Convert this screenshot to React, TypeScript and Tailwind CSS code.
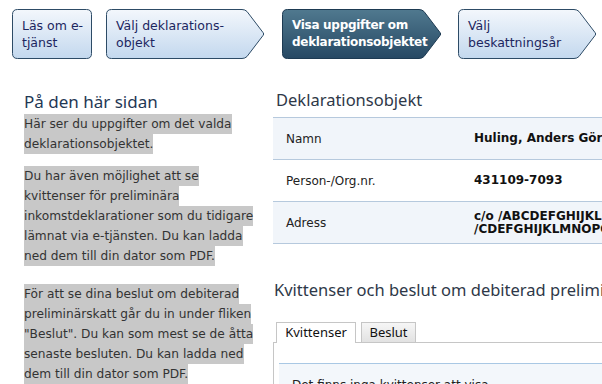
import React from 'react';

type Step = { lines: string[]; width: number; arrow: boolean; active?: boolean; ml: string };

const steps: Step[] = [
    { lines: ['Läs om e-', 'tjänst'], width: 80, arrow: false, ml: 'ml-[12px]' },
    { lines: ['Välj deklarations-', 'objekt'], width: 159, arrow: true, ml: 'ml-[14px]' },
    { lines: ['Visa uppgifter om', 'deklarationsobjektet'], width: 160, arrow: true, active: true, ml: 'ml-[17px]' },
    { lines: ['Välj', 'beskattningsår'], width: 139, arrow: true, ml: 'ml-[16px]' },
];

const intro: { mb: string; lines: string[] }[] = [
    { mb: 'mb-[12px]', lines: ['Här ser du uppgifter om det valda', 'deklarationsobjektet.'] },
    {
        mb: 'mb-[18px]',
        lines: [
            'Du har även möjlighet att se',
            'kvittenser för preliminära',
            'inkomstdeklarationer som du tidigare',
            'lämnat via e-tjänsten. Du kan ladda',
            'ned dem till din dator som PDF.',
        ],
    },
    {
        mb: 'mb-0',
        lines: [
            'För att se dina beslut om debiterad',
            'preliminärskatt går du in under fliken',
            '"Beslut". Du kan som mest se de åtta',
            'senaste besluten. Du kan ladda ned',
            'dem till din dator som PDF.',
        ],
    },
];

const rows = [
    { label: 'Namn', value: ['Huling, Anders Göran Mikael'], shade: true },
    { label: 'Person-/Org.nr.', value: ['431109-7093'], shade: false },
    { label: 'Adress', value: ['c/o /ABCDEFGHIJKLMNOPQRSTU', '/CDEFGHIJKLMNOPQRSTUVWX'], shade: true },
];

function StepShape({ w, arrow, active, id }: { w: number; arrow: boolean; active?: boolean; id: string }) {
    const h = 50;
    const a = 20;
    const r = 5;
    const x0 = 0.5;
    const y0 = 0.5;
    const x1 = w - 0.5;
    const y1 = h - 0.5;
    const bx = w - a;
    const d = arrow
        ? `M${x0 + r},${y0} H${bx - 3} Q${bx},${y0} ${bx + 2},${y0 + 2} L${x1 - 1.5},${h / 2 - 1.5} Q${x1},${h / 2} ${x1 - 1.5},${h / 2 + 1.5} L${bx + 2},${y1 - 2} Q${bx},${y1} ${bx - 3},${y1} H${x0 + r} Q${x0},${y1} ${x0},${y1 - r} V${y0 + r} Q${x0},${y0} ${x0 + r},${y0} Z`
        : `M${x0 + r},${y0} H${x1 - r} Q${x1},${y0} ${x1},${y0 + r} V${y1 - r} Q${x1},${y1} ${x1 - r},${y1} H${x0 + r} Q${x0},${y1} ${x0},${y1 - r} V${y0 + r} Q${x0},${y0} ${x0 + r},${y0} Z`;
    return (
        <svg width={w} height={h} className="absolute inset-0">
            <defs>
                <linearGradient id={id} x1="0" y1="0" x2="0" y2="1">
                    <stop offset="0" stopColor={active ? '#50798f' : '#f3f7fc'} />
                    <stop offset="1" stopColor={active ? '#264863' : '#c3d8ee'} />
                </linearGradient>
            </defs>
            <path d={d} fill={`url(#${id})`} stroke={active ? '#1d3a52' : '#2d4b66'} strokeWidth="1" />
        </svg>
    );
}

export default function App() {
    return (
        <div className="w-[602px] h-[384px] overflow-hidden bg-white font-['DejaVu_Sans',sans-serif]">
            <div className="flex pt-[9px]">
                {steps.map((s, i) => (
                    <div
                        key={i}
                        className={`relative h-[50px] shrink-0 ${s.ml}`}
                        style={{ width: s.width }}
                    >
                        <StepShape w={s.width} arrow={s.arrow} active={s.active} id={`g${i}`} />
                        <div
                            className={`relative flex h-full flex-col justify-center pl-[10px] leading-[17px] ${
                                s.active
                                    ? 'text-[12px] font-bold tracking-[-0.3px] text-white'
                                    : 'text-[12.5px] text-[#1c2660]'
                            }`}
                        >
                            {s.lines.map((l) => (
                                <span key={l} className="whitespace-nowrap">
                                    {l}
                                </span>
                            ))}
                        </div>
                    </div>
                ))}
            </div>

            <div className="flex pt-[29px]">
                <div className="ml-[24px] w-[231px] shrink-0 pt-[2px]">
                    <h2 className="font-['Noto_Sans',sans-serif] text-[17px] leading-[24px] text-[#1f3854]">
                        På den här sidan
                    </h2>
                    <div className="text-[12.2px] leading-[20px] text-[#333]">
                        {intro.map((p, i) => (
                            <p key={i} className={p.mb}>
                                {p.lines.map((l, j) => (
                                    <React.Fragment key={j}>
                                        <span className="whitespace-nowrap bg-[#c8c8c8] py-[3px]">{l}</span>
                                        <br />
                                    </React.Fragment>
                                ))}
                            </p>
                        ))}
                    </div>
                </div>

                <div className="ml-[18px] min-w-0 flex-1 overflow-hidden">
                    <h2 className="pl-[3px] font-['Noto_Sans',sans-serif] text-[16.5px] leading-[24px] text-[#2e3848]">
                        Deklarationsobjekt
                    </h2>
                    <div className="mt-[5px] w-[500px] border-b border-[#b6c9dd]">
                        {rows.map((r) => (
                            <div
                                key={r.label}
                                className={`flex h-[42px] items-center border-t border-[#b6c9dd] text-[12px] ${
                                    r.shade ? 'bg-[#f1f5fa]' : 'bg-white'
                                }`}
                            >
                                <div className="w-[201px] shrink-0 pl-[13px] text-[#222]">{r.label}</div>
                                <div className="flex flex-col whitespace-nowrap font-bold leading-[13px] text-[#111]">
                                    {r.value.map((v) => (
                                        <span key={v}>{v}</span>
                                    ))}
                                </div>
                            </div>
                        ))}
                    </div>

                    <h2 className="mt-[34px] whitespace-nowrap pl-[1px] font-['Noto_Sans',sans-serif] text-[16.5px] leading-[24px] text-[#2e3848]">
                        Kvittenser och beslut om debiterad preliminärskatt
                    </h2>

                    <div className="mt-[20px] w-[500px]">
                        <div className="flex gap-[5px] pl-[3px] font-['Noto_Sans',sans-serif] text-[13px] text-[#111]">
                            <div className="relative z-10 -mb-px flex h-[21px] w-[80px] items-center justify-center border border-b-0 border-[#c6c6c6] bg-white">
                                Kvittenser
                            </div>
                            <div className="flex h-[20px] w-[55px] items-center justify-center border border-b-0 border-[#c6c6c6] bg-gradient-to-b from-[#f6f6f6] to-[#e2e2e2]">
                                Beslut
                            </div>
                        </div>
                        <div className="border-l border-t border-[#c6c6c6] pl-[5px] pt-[20px]">
                            <div className="border-t border-[#a9c8e4] bg-[#f3f7fb] pl-[13px] pt-[12px] text-[12px] text-[#222]">
                                Det finns inga kvittenser att visa
                            </div>
                        </div>
                    </div>
                </div>
            </div>
        </div>
    );
}
